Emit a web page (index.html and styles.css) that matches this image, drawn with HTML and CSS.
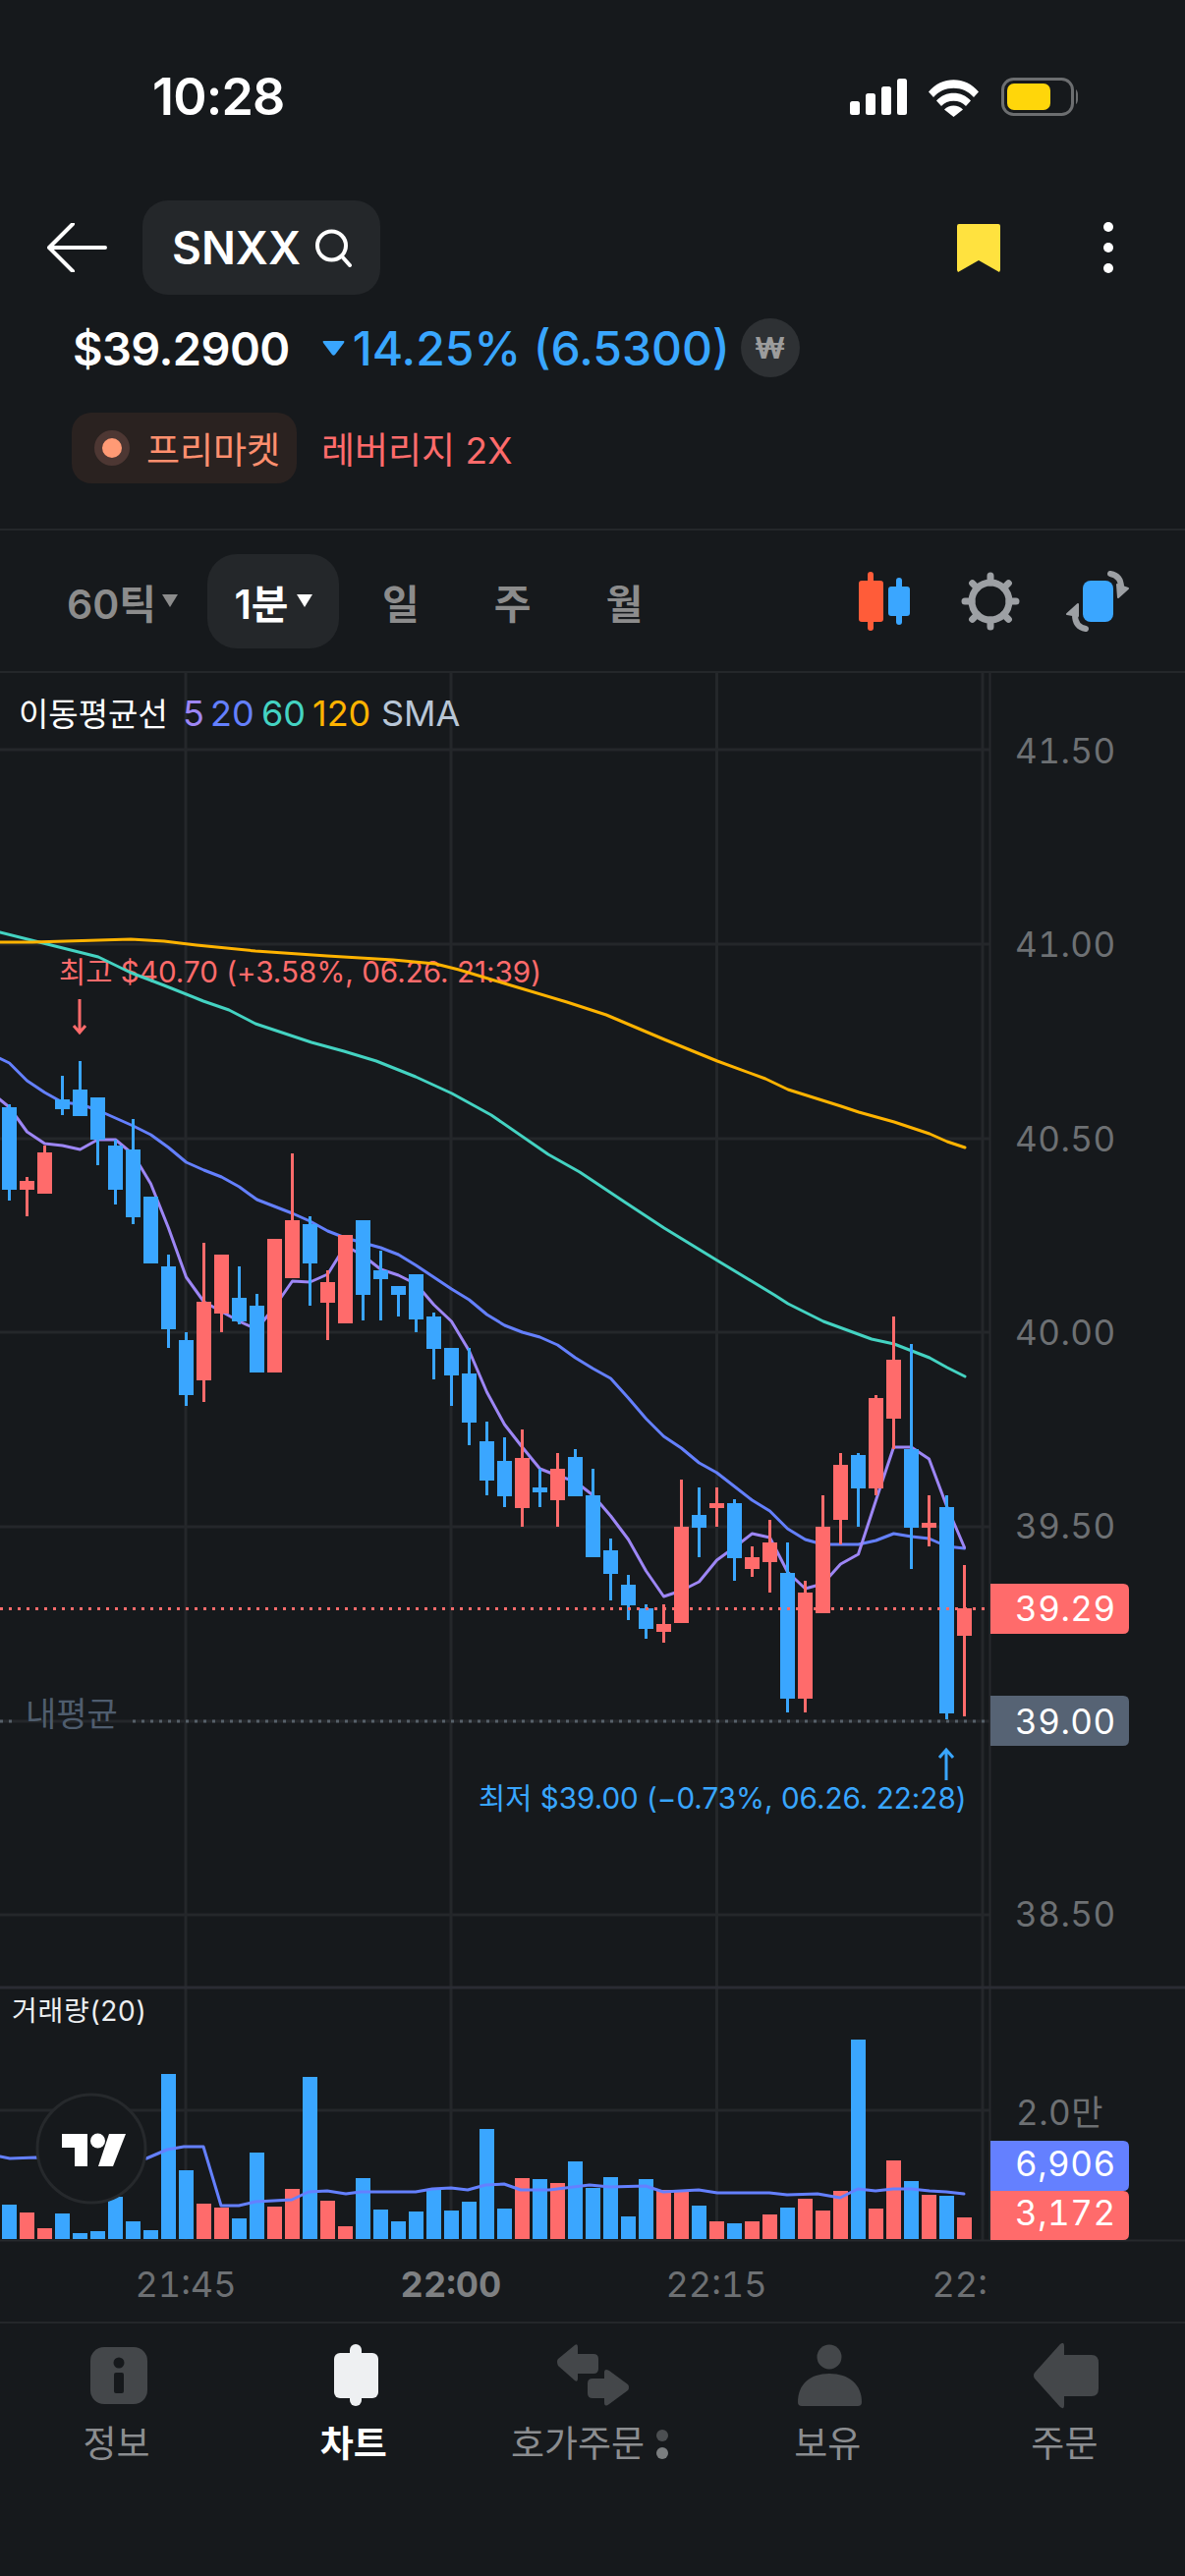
FILE: index.html
```html
<!DOCTYPE html>
<html lang="ko">
<head>
<meta charset="utf-8">
<title>SNXX 차트</title>
<link rel="stylesheet" href="styles.css">
</head>
<body>
<div class="screen">
  <header class="status">
    <span class="clock">10:28</span>
    <svg class="status-icons" width="232" height="40" viewBox="865 78 232 40">
      <rect class="w" x="865" y="102" width="10" height="14" rx="2.5"/>
      <rect class="w" x="881" y="94" width="10" height="22" rx="2.5"/>
      <rect class="w" x="897" y="87" width="10" height="29" rx="2.5"/>
      <rect class="w" x="913" y="79" width="10" height="37" rx="2.5"/>
      <path class="w" d="M945 92.5C958 76 983 76 996 92.5L991 98C981 85.500 960 85.500 950 98Z"/>
      <path class="w" d="M953 101.500C962 91 979 91 988 101.500L983 107C977 100 964 100 958 107Z"/>
      <path class="w" d="M961 110.500C966 105 975 105 980 110.500L970.500 118Z"/>
      <rect class="batt" x="1020.500" y="79.500" width="71" height="36" rx="11"/>
      <rect class="batt-fill" x="1025" y="84" width="44" height="27" rx="7"/>
      <path class="batt-nub" d="M1095 90C1098 92 1098 103 1095 105Z"/>
    </svg>
  </header>

  <section class="topbar">
    <svg class="back" width="61" height="50" viewBox="48 227 61 50">
      <path class="line-w" d="M107 252H51M74 228L50 252L74 276"/>
    </svg>
    <div class="search-pill">
      <span class="ticker">SNXX</span>
      <svg width="40" height="40" viewBox="0 0 40 40">
        <circle class="line-w" cx="18.500" cy="18" r="14.500"/>
        <path class="line-w" d="M29 29L37 38"/>
      </svg>
    </div>
    <div class="top-actions">
      <svg width="44" height="49" viewBox="0 0 44 49"><path class="bookmark" d="M2 0H42Q44 0 44 2V47L43 49L22 37L1 49L0 47V2Q0 0 2 0Z"/></svg>
      <svg width="10" height="52" viewBox="0 0 10 52"><circle class="w" cx="5" cy="5" r="5"/><circle class="w" cx="5" cy="26" r="5"/><circle class="w" cx="5" cy="47" r="5"/></svg>
    </div>
  </section>

  <section class="price-row">
    <span class="price">$39.2900</span>
    <svg class="tri-down" width="23" height="15" viewBox="0 0 23 15"><path class="down-fill" d="M1.500 0H21.500Q23 0 22 2L13 14Q11.500 15.500 10 14L1 2Q0 0 1.500 0Z"/></svg>
    <span class="change">14.25% (6.5300)</span>
    <span class="won">₩</span>
  </section>

  <section class="tags">
    <div class="session">
      <span class="session-dot"></span>
      <span class="session-text">프리마켓</span>
    </div>
    <span class="leverage">레버리지 2X</span>
  </section>

  <nav class="tabs">
    <div class="tab tab-first">60틱<span class="caret caret-gray"></span></div>
    <div class="tab tab-active">1분<span class="caret caret-white"></span></div>
    <div class="tab tab-day">일</div>
    <div class="tab tab-week">주</div>
    <div class="tab tab-month">월</div>
    <svg class="tools" width="275" height="62" viewBox="874 581 275 62">
      <rect class="tool-red" x="883" y="582" width="6" height="60" rx="3"/>
      <rect class="tool-red" x="874" y="591" width="25" height="42" rx="3"/>
      <rect class="tool-blue" x="912" y="588" width="6" height="48" rx="3"/>
      <rect class="tool-blue" x="904" y="597" width="22" height="30" rx="3"/>
      <g class="gear">
        <circle cx="1008" cy="612" r="19"/>
        <path d="M1008 586V593M1008 631V638M982 612H989M1027 612H1034M989.600 593.600L994.600 598.600M1021.400 625.400L1026.400 630.400M1026.400 593.600L1021.400 598.600M994.600 625.400L989.600 630.400"/>
      </g>
      <rect class="tool-blue" x="1102" y="591" width="31" height="42" rx="8"/>
      <path class="swap" d="M1130 584Q1141 586 1141 598"/>
      <path class="swap-head" d="M1137 595L1148 599L1138 608Z"/>
      <path class="swap" d="M1105 640Q1094 638 1094 626"/>
      <path class="swap-head" d="M1097 615L1086 625L1097 627Z"/>
    </svg>
  </nav>

  <main class="chart">
    <svg id="chart" class="chart-svg" width="1206" height="1678" viewBox="0 685 1206 1678">
      <defs>
        <clipPath id="axis-clip"><rect x="0" y="2290" width="1007" height="70"/></clipPath>
      </defs>
      <g id="grid"></g>
      <text class="t-hilo t-red" x="60" y="1000">최고 $40.70 (+3.58%, 06.26. 21:39)</text>
      <text class="t-hilo t-blue" x="487" y="1841">최저 $39.00 (−0.73%, 06.26. 22:28)</text>
      <g id="plot"></g>
      <path class="arrow-red" d="M81 1017V1050M75 1044L81 1051L87 1044"/>
      <path class="arrow-blue" d="M963 1812V1782M956 1789L963 1781L970 1789"/>

      <text class="t-legend t-white" x="19" y="739">이동평균선</text>
      <text class="t-legend t-ma5" x="186" y="739">5</text>
      <text class="t-legend t-ma20" x="214" y="739">20</text>
      <text class="t-legend t-ma60" x="266" y="739">60</text>
      <text class="t-legend t-ma120" x="318" y="739">120</text>
      <text class="t-legend t-sma" x="388" y="739">SMA</text>

      <text class="t-avg" x="26" y="1757">내평균</text>

      <text class="t-axis" x="1033" y="777">41.50</text>
      <text class="t-axis" x="1033" y="974">41.00</text>
      <text class="t-axis" x="1033" y="1172">40.50</text>
      <text class="t-axis" x="1033" y="1369">40.00</text>
      <text class="t-axis" x="1033" y="1566">39.50</text>
      <text class="t-axis" x="1033" y="1961">38.50</text>
      <text class="t-axis" x="1034" y="2163">2.0만</text>

      <path class="tag-red" d="M1008 1612H1143Q1149 1612 1149 1618V1657Q1149 1663 1143 1663H1008Z"/>
      <text class="t-tag" x="1033" y="1650">39.29</text>
      <path class="tag-gray" d="M1008 1726H1143Q1149 1726 1149 1732V1771Q1149 1777 1143 1777H1008Z"/>
      <text class="t-tag" x="1033" y="1765">39.00</text>
      <path class="tag-ma" d="M1008 2179H1143Q1149 2179 1149 2185V2224Q1149 2230 1143 2230H1008Z"/>
      <text class="t-tag" x="1033" y="2215">6,906</text>
      <path class="tag-red" d="M1008 2230H1143Q1149 2230 1149 2236V2274Q1149 2280 1143 2280H1008Z"/>
      <text class="t-tag" x="1033" y="2265">3,172</text>

      <text class="t-vol" x="12" y="2057">거래량(20)</text>

      <circle class="logo-disc" cx="93" cy="2187" r="55"/>
      <path class="w" d="M63 2172H89V2205H76V2186H63Z"/>
      <circle class="w" cx="99.500" cy="2179" r="7.500"/>
      <path class="w" d="M111 2172H128L115 2205H100Z"/>

      <g clip-path="url(#axis-clip)">
        <text class="t-time" x="189" y="2338">21:45</text>
        <text class="t-time t-time-bold" x="459" y="2338">22:00</text>
        <text class="t-time" x="729" y="2338">22:15</text>
        <text class="t-time" x="1000" y="2338">22:30</text>
      </g>
    </svg>
  </main>

  <footer class="nav">
    <div class="nav-item">
      <svg width="80" height="70" viewBox="0 0 80 70">
        <rect class="nav-fill" x="11" y="4" width="58" height="58" rx="14"/>
        <circle class="nav-cut" cx="40" cy="20" r="5.500"/>
        <rect class="nav-cut" x="35" y="30" width="10" height="21" rx="2"/>
      </svg>
      <span class="nav-label">정보</span>
    </div>
    <div class="nav-item nav-item-active">
      <svg width="80" height="70" viewBox="0 0 80 70">
        <rect class="nav-on" x="34" y="1" width="12" height="63" rx="6"/>
        <rect class="nav-on" x="18" y="10" width="45" height="46" rx="6"/>
      </svg>
      <span class="nav-label">차트</span>
    </div>
    <div class="nav-item">
      <svg width="80" height="70" viewBox="0 0 80 70">
        <path class="nav-fill" d="M4 19Q4 17 5 16L22 2Q25 0 25 4V11H41Q46 11 46 16V26Q46 31 41 31H25V36Q25 40 22 38L5 23Q4 21 4 19Z"/>
        <path class="nav-fill" d="M77 45Q77 47 76 48L57 62Q52 66 52 60V56H40Q35 56 35 51V41Q35 36 40 36H52V30Q52 25 57 28L76 42Q77 43 77 45Z"/>
      </svg>
      <span class="nav-label nav-label-dots">호가주문<span class="dots"><span class="dot-a"></span><span class="dot-b"></span></span></span>
    </div>
    <div class="nav-item">
      <svg width="80" height="70" viewBox="0 0 80 70">
        <circle class="nav-fill" cx="40" cy="14" r="12.500"/>
        <path class="nav-fill" d="M8 60C8 42 20 31 40 31C60 31 73 42 73 60Q73 64 69 64H12Q8 64 8 60Z"/>
      </svg>
      <span class="nav-label">보유</span>
    </div>
    <div class="nav-item">
      <svg width="80" height="70" viewBox="0 0 80 70">
        <path class="nav-fill" d="M7 33Q7 31 8 30L34 1Q38 -2 38 3V12H66Q73 12 73 20V46Q73 54 66 54H38V63Q38 68 34 65L8 36Q7 35 7 33Z"/>
      </svg>
      <span class="nav-label">주문</span>
    </div>
  </footer>
</div>
<script src="app.js"></script>
</body>
</html>
```

FILE: styles.css
```css
* { box-sizing: border-box; }
html, body { margin: 0; padding: 0; background: #16191c; }
body { font-family: Inter, "Noto Sans CJK KR", sans-serif; color: #fff; }
.screen { width: 1206px; height: 2622px; overflow: hidden; display: flex; flex-direction: column; }
svg { display: block; }

.w { fill: #fff; }
.line-w { fill: none; stroke: #fff; stroke-width: 4; stroke-linecap: round; stroke-linejoin: round; }

.status { height: 197px; padding: 0 109px 0 155px; display: flex; align-items: center; justify-content: space-between; }
.clock { font-size: 52px; font-weight: 600; letter-spacing: -0.8px; }
.batt { fill: none; stroke: #6c6e70; stroke-width: 3; }
.batt-fill { fill: #ffd60a; }
.batt-nub { fill: #6c6e70; }

.topbar { margin-top: 7px; height: 96px; padding: 0 73px 0 48px; display: flex; align-items: center; }
.search-pill { margin-left: 36px; width: 242px; height: 96px; border-radius: 26px; background: #24272a; padding-left: 30px; display: flex; align-items: center; gap: 13px; }
.ticker { font-size: 46px; font-weight: 600; }
.top-actions { margin-left: auto; display: flex; align-items: center; gap: 105px; }
.bookmark { fill: #ffe23f; }

.price-row { margin-top: 24px; height: 60px; padding-left: 74px; display: flex; align-items: center; }
.price { font-size: 47px; font-weight: 600; letter-spacing: -0.6px; }
.tri-down { margin-left: 33px; }
.down-fill { fill: #39a6ff; }
.change { margin-left: 8px; font-size: 48px; font-weight: 500; color: #39a6ff; }
.won { margin-left: 11px; width: 60px; height: 60px; border-radius: 50%; background: #2e3134; color: #9c9c9c; font-size: 30px; font-weight: 700; display: flex; align-items: center; justify-content: center; }

.tags { margin-top: 36px; height: 72px; padding-left: 73px; display: flex; align-items: center; }
.session { width: 229px; height: 72px; border-radius: 20px; background: #2a2220; padding-left: 23px; display: flex; align-items: center; gap: 17px; }
.session-dot { width: 36px; height: 36px; border-radius: 50%; background: #ff9a75; border: 8px solid #4d3733; }
.session-text { font-size: 37px; color: #ff8f6e; }
.leverage { margin-left: 25px; font-size: 37px; color: #ff6b6b; }

.tabs { margin-top: 46px; height: 147px; border-top: 2px solid #24272a; border-bottom: 2px solid #24272a; padding-left: 68px; padding-right: 57px; display: flex; align-items: center; }
.tab { font-size: 41px; font-weight: 600; color: #8c8c8c; display: flex; align-items: center; }
.tab-first { gap: 6px; }
.tab-active { margin-left: 30px; width: 134px; height: 96px; border-radius: 30px; background: #24272a; color: #fff; justify-content: center; gap: 8px; }
.tab-day { margin-left: 44px; }
.tab-week { margin-left: 76px; }
.tab-month { margin-left: 76px; }
.caret { width: 0; height: 0; border-left: 8px solid transparent; border-right: 8px solid transparent; border-top: 13px solid #8c8c8c; }
.caret-white { border-top-color: #fff; }
.tools { margin-left: auto; }
.tool-red { fill: #ff5c39; }
.tool-blue { fill: #3aa6ff; }
.gear { fill: none; stroke: #9da0a4; stroke-width: 7; stroke-linecap: round; }
.swap { fill: none; stroke: #9da0a4; stroke-width: 6; stroke-linecap: round; }
.swap-head { fill: #9da0a4; stroke: #9da0a4; stroke-width: 2; stroke-linejoin: round; }

.chart { height: 1678px; }
.chart-svg { overflow: hidden; }
.grid-line { stroke: #24272a; stroke-width: 3; }
.axis-line { stroke: #26292c; stroke-width: 2; }
.pane-line { stroke: #2a2c33; stroke-width: 3; }
.ma { fill: none; stroke-width: 3; stroke-linejoin: round; stroke-linecap: round; }
.ma5 { stroke: #9d86f5; }
.ma20 { stroke: #6480ff; }
.ma60 { stroke: #44d3c2; }
.ma120 { stroke: #ffb300; }
.up { fill: #ff6b6b; }
.down { fill: #3aa6ff; }
.dots-red { stroke: #ff6b6b; stroke-width: 3; stroke-dasharray: 3 6; fill: none; }
.dots-gray { stroke: #566069; stroke-width: 3; stroke-dasharray: 3 6; fill: none; }
.arrow-red { fill: none; stroke: #ff6b6b; stroke-width: 3; }
.arrow-blue { fill: none; stroke: #39a6ff; stroke-width: 3; }
.logo-disc { fill: #16191c; stroke: #26292c; stroke-width: 3; }

.t-hilo { font-size: 29.600px; }
.t-red { fill: #ff6b6b; }
.t-blue { fill: #39a6ff; }
.t-legend { font-size: 36px; }
.t-white { fill: #fff; font-size: 33px; }
.t-ma5 { fill: #9d86f5; }
.t-ma20 { fill: #6480ff; }
.t-ma60 { fill: #44d3c2; }
.t-ma120 { fill: #ffb300; }
.t-sma { fill: #b8c6d6; }
.t-avg { font-size: 34px; fill: #4f5d6e; }
.t-axis { font-size: 35px; fill: #6d7073; font-variant-numeric: tabular-nums; letter-spacing: 0.5px; }
.t-tag { font-size: 35px; fill: #fff; font-variant-numeric: tabular-nums; letter-spacing: 0.5px; }
.t-vol { font-size: 28px; fill: #eceef0; letter-spacing: 0.7px; }
.t-time { font-size: 36px; fill: #6d7073; text-anchor: middle; font-variant-numeric: tabular-nums; }
.t-time-bold { font-weight: 700; fill: #7e8082; }
.tag-red { fill: #ff6b6b; }
.tag-gray { fill: #566374; }
.tag-ma { fill: #6480ff; }

.nav { flex: 1; display: grid; grid-template-columns: repeat(5, 1fr); border-top: 2px solid #24272a; padding-top: 20px; align-items: start; }
.nav-item { display: flex; flex-direction: column; align-items: center; gap: 8px; }
.nav-fill { fill: #44474a; }
.nav-cut { fill: #16191c; }
.nav-on { fill: #eef0f2; }
.nav-label { font-size: 37px; line-height: 50px; color: #8b8d90; margin-right: 4px; }
.nav-label-dots { position: relative; left: -1px; display: flex; align-items: center; gap: 12px; }
.nav-item-active .nav-label { color: #fff; font-weight: 700; }
.dots { display: flex; flex-direction: column; gap: 6px; }
.dot-a, .dot-b { width: 12px; height: 12px; border-radius: 50%; background: #4c4f52; }
.dot-b { background: #7b7e80; }
```

FILE: app.js
```js
(function () {
  var NS = 'http://www.w3.org/2000/svg';
  var grid = document.getElementById('grid');
  var plot = document.getElementById('plot');

  function el(parent, name, attrs) {
    var n = document.createElementNS(NS, name);
    for (var k in attrs) n.setAttribute(k, attrs[k]);
    parent.appendChild(n);
    return n;
  }
  function hline(y, x2, cls) { el(grid, 'line', { x1: 0, x2: x2, y1: y, y2: y, 'class': cls }); }
  function vline(x, cls, y1, y2) { el(grid, 'line', { x1: x, x2: x, y1: y1, y2: y2, 'class': cls }); }

  [763, 961, 1159, 1356, 1554, 1752, 1949, 2148].forEach(function (y) { hline(y, 1007, 'grid-line'); });
  [189, 459, 729.5, 1000].forEach(function (x) { vline(x, 'grid-line', 685, 2280); });
  vline(1007.5, 'axis-line', 685, 2280);
  hline(2023, 1206, 'pane-line');
  hline(2280.5, 1206, 'axis-line');

  function cx(i) { return 9.5 + 18 * i; }
  function line(points, cls) {
    el(plot, 'polyline', { points: points.map(function (p) { return p.join(','); }).join(' '), 'class': 'ma ' + cls });
  }
  function byIndex(ys, prefix) {
    var pts = prefix ? prefix.slice() : [];
    ys.forEach(function (y, i) { pts.push([cx(i), y]); });
    return pts;
  }

  line([[0, 949], [40, 959], [100, 974], [133, 990], [167, 1003], [207, 1019], [233, 1028], [260, 1042], [290, 1052], [317, 1061], [350, 1070], [383, 1080], [423, 1096], [460, 1113], [500, 1135], [558, 1175], [590, 1193], [635, 1223], [676, 1250], [730, 1283], [788, 1318], [802, 1327], [838, 1345], [887, 1363], [910, 1368], [946, 1382], [964, 1392], [982, 1401]], 'ma60');
  line([[0, 959], [33, 959], [67, 958], [133, 956], [167, 958], [200, 962], [260, 968], [333, 973], [400, 977], [443, 981], [467, 987], [500, 997], [577, 1020], [617, 1033], [676, 1058], [730, 1080], [779, 1098], [802, 1109], [856, 1126], [874, 1132], [910, 1142], [946, 1154], [964, 1162], [982, 1168]], 'ma120');
  line(byIndex([1082, 1100, 1112, 1122, 1124, 1130, 1138, 1146, 1155, 1168, 1183, 1191, 1198, 1208, 1221, 1228, 1235, 1243, 1253, 1260, 1265, 1270, 1277, 1288, 1300, 1312, 1323, 1338, 1349, 1356, 1361, 1369, 1382, 1393, 1403, 1423, 1444, 1462, 1474, 1489, 1499, 1513, 1527, 1538, 1556, 1567, 1572, 1572, 1572, 1568, 1561, 1564, 1566, 1574, 1576], [[-9, 1073]]), 'ma20');
  line(byIndex([1127, 1152, 1164, 1166, 1170, 1160, 1160, 1175, 1205, 1250, 1300, 1325, 1335, 1345, 1353, 1330, 1304, 1305, 1297, 1268, 1278, 1292, 1298, 1307, 1328, 1345, 1375, 1417, 1450, 1473, 1495, 1502, 1508, 1522, 1543, 1567, 1599, 1625, 1619, 1610, 1588, 1575, 1561, 1565, 1600, 1617, 1612, 1592, 1582, 1527, 1473, 1473, 1485, 1533, 1575], [[-9, 1112]]), 'ma5');

  // [wick top, body top, body bottom, wick bottom]; u = rising (red), d = falling (blue)
  var candles = [
    ['d', 1124, 1127, 1211, 1222], ['u', 1198, 1202, 1211, 1238], ['u', 1166, 1173, 1215, 1215],
    ['d', 1095, 1119, 1129, 1135], ['d', 1080, 1109, 1136, 1136], ['d', 1117, 1117, 1160, 1186],
    ['d', 1160, 1166, 1211, 1226], ['d', 1139, 1170, 1239, 1246], ['d', 1218, 1218, 1286, 1286],
    ['d', 1277, 1289, 1353, 1372], ['d', 1356, 1364, 1420, 1431], ['u', 1265, 1325, 1405, 1427],
    ['u', 1277, 1277, 1337, 1356], ['d', 1289, 1321, 1345, 1348], ['d', 1317, 1329, 1397, 1397],
    ['u', 1261, 1261, 1397, 1397], ['u', 1174, 1242, 1301, 1301], ['d', 1238, 1246, 1286, 1329],
    ['u', 1293, 1305, 1326, 1364], ['u', 1257, 1257, 1347, 1347], ['d', 1242, 1242, 1318, 1344],
    ['d', 1273, 1293, 1302, 1344], ['d', 1309, 1309, 1318, 1340], ['d', 1297, 1297, 1343, 1356],
    ['d', 1336, 1340, 1373, 1404], ['d', 1372, 1372, 1400, 1431], ['d', 1372, 1398, 1448, 1471],
    ['d', 1447, 1467, 1507, 1522], ['d', 1463, 1487, 1523, 1534], ['u', 1455, 1484, 1535, 1554],
    ['d', 1495, 1514, 1519, 1534], ['u', 1479, 1495, 1527, 1554], ['d', 1475, 1483, 1523, 1523],
    ['d', 1495, 1522, 1585, 1585], ['d', 1566, 1578, 1602, 1629], ['d', 1603, 1613, 1634, 1649],
    ['d', 1633, 1637, 1658, 1668], ['u', 1633, 1653, 1661, 1672], ['u', 1506, 1554, 1652, 1652],
    ['d', 1514, 1542, 1555, 1585], ['u', 1514, 1530, 1535, 1554], ['d', 1526, 1530, 1586, 1609],
    ['u', 1574, 1585, 1597, 1605], ['u', 1547, 1570, 1590, 1621], ['d', 1570, 1601, 1729, 1743],
    ['u', 1609, 1621, 1729, 1743], ['u', 1522, 1554, 1642, 1642], ['u', 1479, 1491, 1547, 1572],
    ['d', 1479, 1481, 1515, 1554], ['u', 1420, 1423, 1515, 1522], ['u', 1340, 1384, 1444, 1475],
    ['d', 1368, 1475, 1555, 1597], ['u', 1522, 1550, 1555, 1574], ['d', 1522, 1534, 1744, 1750],
    ['u', 1593, 1637, 1665, 1747]
  ];
  candles.forEach(function (c, i) {
    var g = el(plot, 'g', { 'class': c[0] === 'u' ? 'up' : 'down' });
    el(g, 'rect', { x: 8 + 18 * i, y: c[1], width: 3, height: c[4] - c[1] });
    el(g, 'rect', { x: 2 + 18 * i, y: c[2], width: 15, height: c[3] - c[2] });
  });

  el(plot, 'line', { x1: 0, x2: 1003, y1: 1637.5, y2: 1637.5, 'class': 'dots-red' });
  el(plot, 'line', { x1: 0, x2: 12, y1: 1752, y2: 1752, 'class': 'dots-gray' });
  el(plot, 'line', { x1: 135, x2: 1003, y1: 1752, y2: 1752, 'class': 'dots-gray' });

  // volume: [direction, top y]
  var vols = [
    ['d', 2244], ['u', 2252], ['u', 2268], ['d', 2253], ['d', 2273], ['d', 2271], ['d', 2236], ['d', 2261], ['d', 2270],
    ['d', 2111], ['d', 2209], ['u', 2243], ['u', 2247], ['d', 2258], ['d', 2191], ['u', 2246], ['u', 2228], ['d', 2114],
    ['u', 2240], ['u', 2266], ['d', 2217], ['d', 2249], ['d', 2261], ['d', 2251], ['d', 2228], ['d', 2250], ['d', 2241],
    ['d', 2167], ['d', 2248], ['u', 2217], ['d', 2218], ['u', 2222], ['d', 2200], ['d', 2227], ['d', 2216], ['d', 2256],
    ['d', 2218], ['u', 2229], ['u', 2231], ['d', 2245], ['u', 2261], ['d', 2263], ['u', 2261], ['u', 2254], ['d', 2247],
    ['u', 2238], ['u', 2250], ['u', 2230], ['d', 2076], ['u', 2248], ['u', 2199], ['d', 2220], ['u', 2234], ['d', 2235],
    ['u', 2257]
  ];
  vols.forEach(function (v, i) {
    el(plot, 'rect', { x: 2 + 18 * i, y: v[1], width: 15, height: 2279 - v[1], 'class': v[0] === 'u' ? 'up' : 'down' });
  });
  line([[0, 2195], [10, 2197], [36, 2196], [149, 2197], [170, 2188], [187, 2185], [207, 2185], [225, 2245], [243, 2245], [260, 2241], [297, 2239], [314, 2231], [333, 2230], [352, 2233], [367, 2231], [423, 2231], [440, 2228], [459, 2227], [476, 2229], [494, 2224], [513, 2223], [530, 2229], [559, 2229], [600, 2224], [621, 2226], [657, 2225], [675, 2231], [711, 2229], [730, 2232], [747, 2232], [783, 2232], [801, 2234], [832, 2233], [855, 2237], [873, 2228], [891, 2230], [909, 2228], [927, 2228], [946, 2230], [963, 2231], [981, 2233]], 'ma20');
})();
```
